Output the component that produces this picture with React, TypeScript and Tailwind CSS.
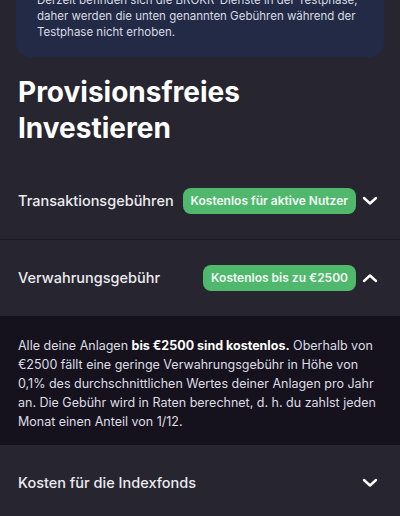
import React from "react";

const font = { fontFamily: "Inter, 'Noto Sans', sans-serif" };

function Chevron({ up = false }: { up?: boolean }) {
  return (
    <svg width="16" height="10" viewBox="0 0 16 10" className="shrink-0">
      <path
        d={up ? "M2 8 L8 2.5 L14 8" : "M2 2 L8 7.5 L14 2"}
        fill="none"
        stroke="white"
        strokeWidth="2.4"
        strokeLinecap="round"
        strokeLinejoin="round"
      />
    </svg>
  );
}

function Badge({ children }: { children: React.ReactNode }) {
  return (
    <span className="rounded-lg bg-[#4fb86d] px-2 h-[26px] flex items-center text-[12px] font-semibold text-[#f1fbf3] whitespace-nowrap">
      {children}
    </span>
  );
}

function Row({ title, badge, open = false }: { title: string; badge?: string; open?: boolean }) {
  return (
    <div className="flex items-center h-[76px] pl-[18px] pr-[22px]">
      <span className="text-[14.5px] font-medium text-[#ececf0] whitespace-nowrap">{title}</span>
      <div className="ml-auto flex items-center gap-[6px]">
        {badge && <Badge>{badge}</Badge>}
        <Chevron up={open} />
      </div>
    </div>
  );
}

export default function App() {
  return (
    <div className="w-[400px] h-[516px] overflow-hidden bg-[#27252f]" style={font}>
      {/* test phase notice */}
      <div className="px-4 -mt-[25px]">
        <div className="rounded-[14px] bg-[#222a45] px-[21px] pt-[17px] pb-[17px] text-[11.5px] leading-4 text-[#d8dbe3] whitespace-nowrap">
          Derzeit befinden sich die BROKR-Dienste in der Testphase,
          <br />
          daher werden die unten genannten Gebühren während der
          <br />
          Testphase nicht erhoben.
        </div>
      </div>

      <h1 className="mt-[17px] px-[18px] text-[28px] leading-[36px] font-bold text-white">
        Provisionsfreies
        <br />
        Investieren
      </h1>

      <div className="mt-[17px]">
        <div className="border-b border-[#1a1822]">
          <Row title="Transaktionsgebühren" badge="Kostenlos für aktive Nutzer" />
        </div>
        <Row title="Verwahrungsgebühr" badge="Kostenlos bis zu €2500" open />
        <div className="bg-[#15121e] px-[18px] pt-[20px] h-[129px] text-[12.5px] leading-[19px] text-[#dedde4] whitespace-nowrap">
          Alle deine Anlagen <span className="font-bold text-white">bis €2500 sind kostenlos.</span> Oberhalb von
          <br />
          €2500 fällt eine geringe Verwahrungsgebühr in Höhe von
          <br />
          0,1% des durchschnittlichen Wertes deiner Anlagen pro Jahr
          <br />
          an. Die Gebühr wird in Raten berechnet, d. h. du zahlst jeden
          <br />
          Monat einen Anteil von 1/12.
        </div>
        <Row title="Kosten für die Indexfonds" />
      </div>
    </div>
  );
}
